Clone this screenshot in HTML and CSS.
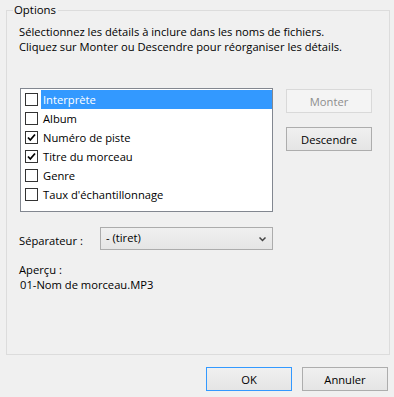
FILE: index.html
```html
<!DOCTYPE html>
<html lang="fr">
<head>
<meta charset="utf-8">
<link rel="stylesheet" href="styles.css">
</head>
<body>
<div class="group">
  <span class="legend">Options</span>
  <p class="intro">Sélectionnez les détails à inclure dans les noms de fichiers.<br>Cliquez sur Monter ou Descendre pour réorganiser les détails.</p>
  <div class="list-area">
    <div class="listbox">
      <div class="row selected"><span class="cb"></span><span class="label">Interprète</span></div>
      <div class="row"><span class="cb"></span><span class="label">Album</span></div>
      <div class="row"><span class="cb"><svg viewBox="0 0 11 11" width="11" height="11"><path d="M2 5.5 L4.3 8 L9 2.5" fill="none" stroke="#000" stroke-width="1.8"/></svg></span><span class="label">Numéro de piste</span></div>
      <div class="row"><span class="cb"><svg viewBox="0 0 11 11" width="11" height="11"><path d="M2 5.5 L4.3 8 L9 2.5" fill="none" stroke="#000" stroke-width="1.8"/></svg></span><span class="label">Titre du morceau</span></div>
      <div class="row"><span class="cb"></span><span class="label">Genre</span></div>
      <div class="row"><span class="cb"></span><span class="label">Taux d'échantillonnage</span></div>
    </div>
    <div class="side-buttons">
      <div class="btn disabled">Monter</div>
      <div class="btn">Descendre</div>
    </div>
  </div>
  <div class="sep-row">
    <span class="sep-label">Séparateur :</span>
    <div class="combo"><span>- (tiret)</span><svg class="chev" viewBox="0 0 7 5" width="7" height="5"><path d="M0.5 0.5 L3.5 3.5 L6.5 0.5" fill="none" stroke="#444" stroke-width="1.5"/></svg></div>
  </div>
  <div class="preview-label">Aperçu :</div>
  <div class="preview">01-Nom de morceau.MP3</div>
</div>
<div class="footer">
  <div class="btn default">OK</div>
  <div class="btn">Annuler</div>
</div>
</body>
</html>
```
FILE: styles.css
```css
html, body {
  margin: 0;
  padding: 0;
  background: #f0f0f0;
}
body {
  font-family: "Open Sans", "Noto Sans", sans-serif;
  font-size: 11.2px;
  color: #000;
  width: 394px;
  height: 397px;
  overflow: hidden;
}
.group {
  position: relative;
  margin: 10px 0 0 6px;
  width: 384px;
  height: 345px;
  box-sizing: border-box;
  border: 1px solid #dcdcdc;
  padding: 13px 0 0 12px;
}
.legend {
  position: absolute;
  top: -9px;
  left: 6px;
  padding: 0 2px 0 1px;
  background: #f0f0f0;
  line-height: 15px;
  font-size: 11.4px;
}
.intro {
  margin: 0;
  line-height: 15px;
}
.list-area {
  display: flex;
  margin-top: 34px;
  margin-left: 1px;
}
.listbox {
  width: 253px;
  height: 124px;
  box-sizing: border-box;
  border: 1px solid #828790;
  background: #fff;
  padding-top: 1px;
}
.row {
  display: flex;
  align-items: center;
  height: 19px;
  padding-left: 4px;
}
.cb {
  width: 13px;
  height: 13px;
  box-sizing: border-box;
  border: 1px solid #333;
  background: #fff;
  display: flex;
  align-items: center;
  justify-content: center;
  flex: none;
}
.cb svg { display: block; }
.label {
  margin-left: 3px;
  padding-left: 2px;
  line-height: 19px;
  flex: 1;
}
.row.selected .label {
  background: #3399ff;
  color: #fff;
}
.side-buttons {
  display: flex;
  flex-direction: column;
  gap: 14px;
  margin-left: 13px;
  margin-top: 1px;
}
.btn {
  width: 86px;
  height: 24px;
  box-sizing: border-box;
  border: 1px solid #adadad;
  background: linear-gradient(#f0f0f0, #e5e5e5);
  display: flex;
  align-items: center;
  justify-content: center;
  line-height: 15px;
}
.btn.disabled {
  border-color: #d9d9d9;
  background: #f4f4f4;
  color: #8d8d8d;
}
.btn.default {
  border-color: #3399ff;
}
.sep-row {
  display: flex;
  align-items: center;
  margin-top: 15px;
}
.sep-label {
  width: 81px;
  padding-top: 3px;
}
.combo {
  width: 173px;
  height: 23px;
  box-sizing: border-box;
  border: 1px solid #acacac;
  background: linear-gradient(#f0f0f0, #e5e5e5);
  display: flex;
  align-items: center;
  justify-content: space-between;
  padding: 0 6px 0 5px;
}
.combo span { margin-top: -3px; }
.chev { display: block; margin-top: 1px; }
.preview-label {
  margin-top: 12px;
  line-height: 15px;
}
.preview {
  padding-left: 1px;
  line-height: 16px;
}
.footer {
  display: flex;
  justify-content: flex-end;
  gap: 10px;
  margin-top: 12px;
  padding-right: 6px;
}
```
